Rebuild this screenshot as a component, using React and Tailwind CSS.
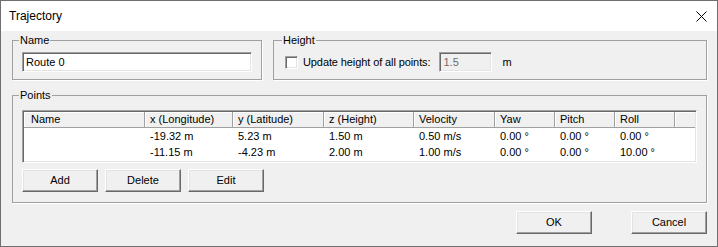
import React from "react";

const sunken =
  "border border-t-[#a0a0a0] border-l-[#a0a0a0] border-b-white border-r-white shadow-[inset_1px_1px_0_#696969,inset_-1px_-1px_0_#e3e3e3]";
const raised =
  "border border-t-white border-l-white border-b-[#696969] border-r-[#696969] shadow-[inset_-1px_-1px_0_#a0a0a0,inset_1px_1px_0_#e3e3e3] bg-[#f0f0f0]";

const columns = [
  { title: "Name", w: "w-[121px]", pad: "pl-[7px]" },
  { title: "x (Longitude)", w: "w-[88px]", pad: "pl-[5px]" },
  { title: "y (Latitude)", w: "w-[91px]", pad: "pl-[5px]" },
  { title: "z (Height)", w: "w-[90px]", pad: "pl-[5px]" },
  { title: "Velocity", w: "w-[81px]", pad: "pl-[5px]" },
  { title: "Yaw", w: "w-[60px]", pad: "pl-[5px]" },
  { title: "Pitch", w: "w-[60px]", pad: "pl-[5px]" },
  { title: "Roll", w: "w-[60px]", pad: "pl-[5px]" },
];

const points = [
  ["", "-19.32 m", "5.23 m", "1.50 m", "0.50 m/s", "0.00 °", "0.00 °", "0.00 °"],
  ["", "-11.15 m", "-4.23 m", "2.00 m", "1.00 m/s", "0.00 °", "0.00 °", "10.00 °"],
];

function Button({ children, className = "" }) {
  return (
    <button type="button" className={`${raised} h-[23px] w-[76px] text-[11px] leading-none text-black ${className}`}>
      {children}
    </button>
  );
}

function Group({ label, className = "", children }) {
  return (
    <fieldset className={`border border-[#a0a0a0] shadow-[1px_1px_0_white] ${className}`}>
      <legend className="ml-[-3px] px-[1px] text-[11px] leading-[13px]">{label}</legend>
      {children}
    </fieldset>
  );
}

export default function App() {
  return (
    <div
      className="w-[718px] h-[247px] border border-[#6f6f6f] bg-[#f0f0f0] flex flex-col text-black"
      style={{ fontFamily: '"Liberation Sans", Arial, sans-serif' }}
    >
      {/* title bar */}
      <div className="h-[30px] bg-white flex items-center justify-between pl-[8px] pr-[10px] shrink-0">
        <span className="text-[12px] leading-none">Trajectory</span>
        <svg width="11" height="11" viewBox="0 0 11 11" className="mt-[1px]">
          <path d="M0.5 0.5 L10.5 10.5 M10.5 0.5 L0.5 10.5" stroke="#000" strokeWidth="1" />
        </svg>
      </div>

      <div className="flex flex-col pl-[11px] pr-[10px] pt-[3px]">
        <div className="flex gap-[11px]">
          <Group label="Name" className="w-[250px] px-[9px] pt-[5px] pb-[7px]">
            <div className={`${sunken} h-[20px] bg-white flex items-center pl-[3px] text-[11px]`}>Route 0</div>
          </Group>

          <Group label="Height" className="flex-1 pl-[11px] pr-[9px] pt-[5px] pb-[7px]">
            <div className="flex items-center h-[20px] text-[11px]">
              <span className={`${sunken} w-[13px] h-[13px] bg-white shrink-0`} />
              <span className="ml-[5px] tracking-[-0.1px]">Update height of all points:</span>
              <div className={`${sunken} ml-[9px] w-[53px] h-[20px] flex items-center pl-[3px] text-[#6d6d6d]`}>1.5</div>
              <span className="ml-[10px]">m</span>
            </div>
          </Group>
        </div>

        <Group label="Points" className="mt-[9px] px-[9px] pt-[8px] pb-[10px]">
          <div className={`${sunken} bg-white h-[53px] p-[1px] overflow-hidden text-[11px]`}>
            <div className="flex h-[16px] bg-[#f0f0f0]">
              {columns.map((c) => (
                <div
                  key={c.title}
                  className={`${c.w} ${c.pad} shrink-0 flex items-center border-r border-b border-r-[#a0a0a0] border-b-[#a0a0a0] shadow-[inset_1px_1px_0_white]`}
                >
                  {c.title}
                </div>
              ))}
              <div className="flex-1 border-b border-b-[#a0a0a0] shadow-[inset_1px_1px_0_white]" />
            </div>
            {points.map((row, i) => (
              <div key={i} className="flex h-[16px] items-center">
                {row.map((v, j) => (
                  <div key={j} className={`${columns[j].w} ${columns[j].pad} shrink-0 whitespace-nowrap`}>
                    {v}
                  </div>
                ))}
              </div>
            ))}
          </div>
          <div className="flex gap-[7px] mt-[6px]">
            <Button>Add</Button>
            <Button>Delete</Button>
            <Button>Edit</Button>
          </div>
        </Group>

        <div className="flex justify-end gap-[39px] mt-[8px]">
          <Button>OK</Button>
          <Button>Cancel</Button>
        </div>
      </div>
    </div>
  );
}
